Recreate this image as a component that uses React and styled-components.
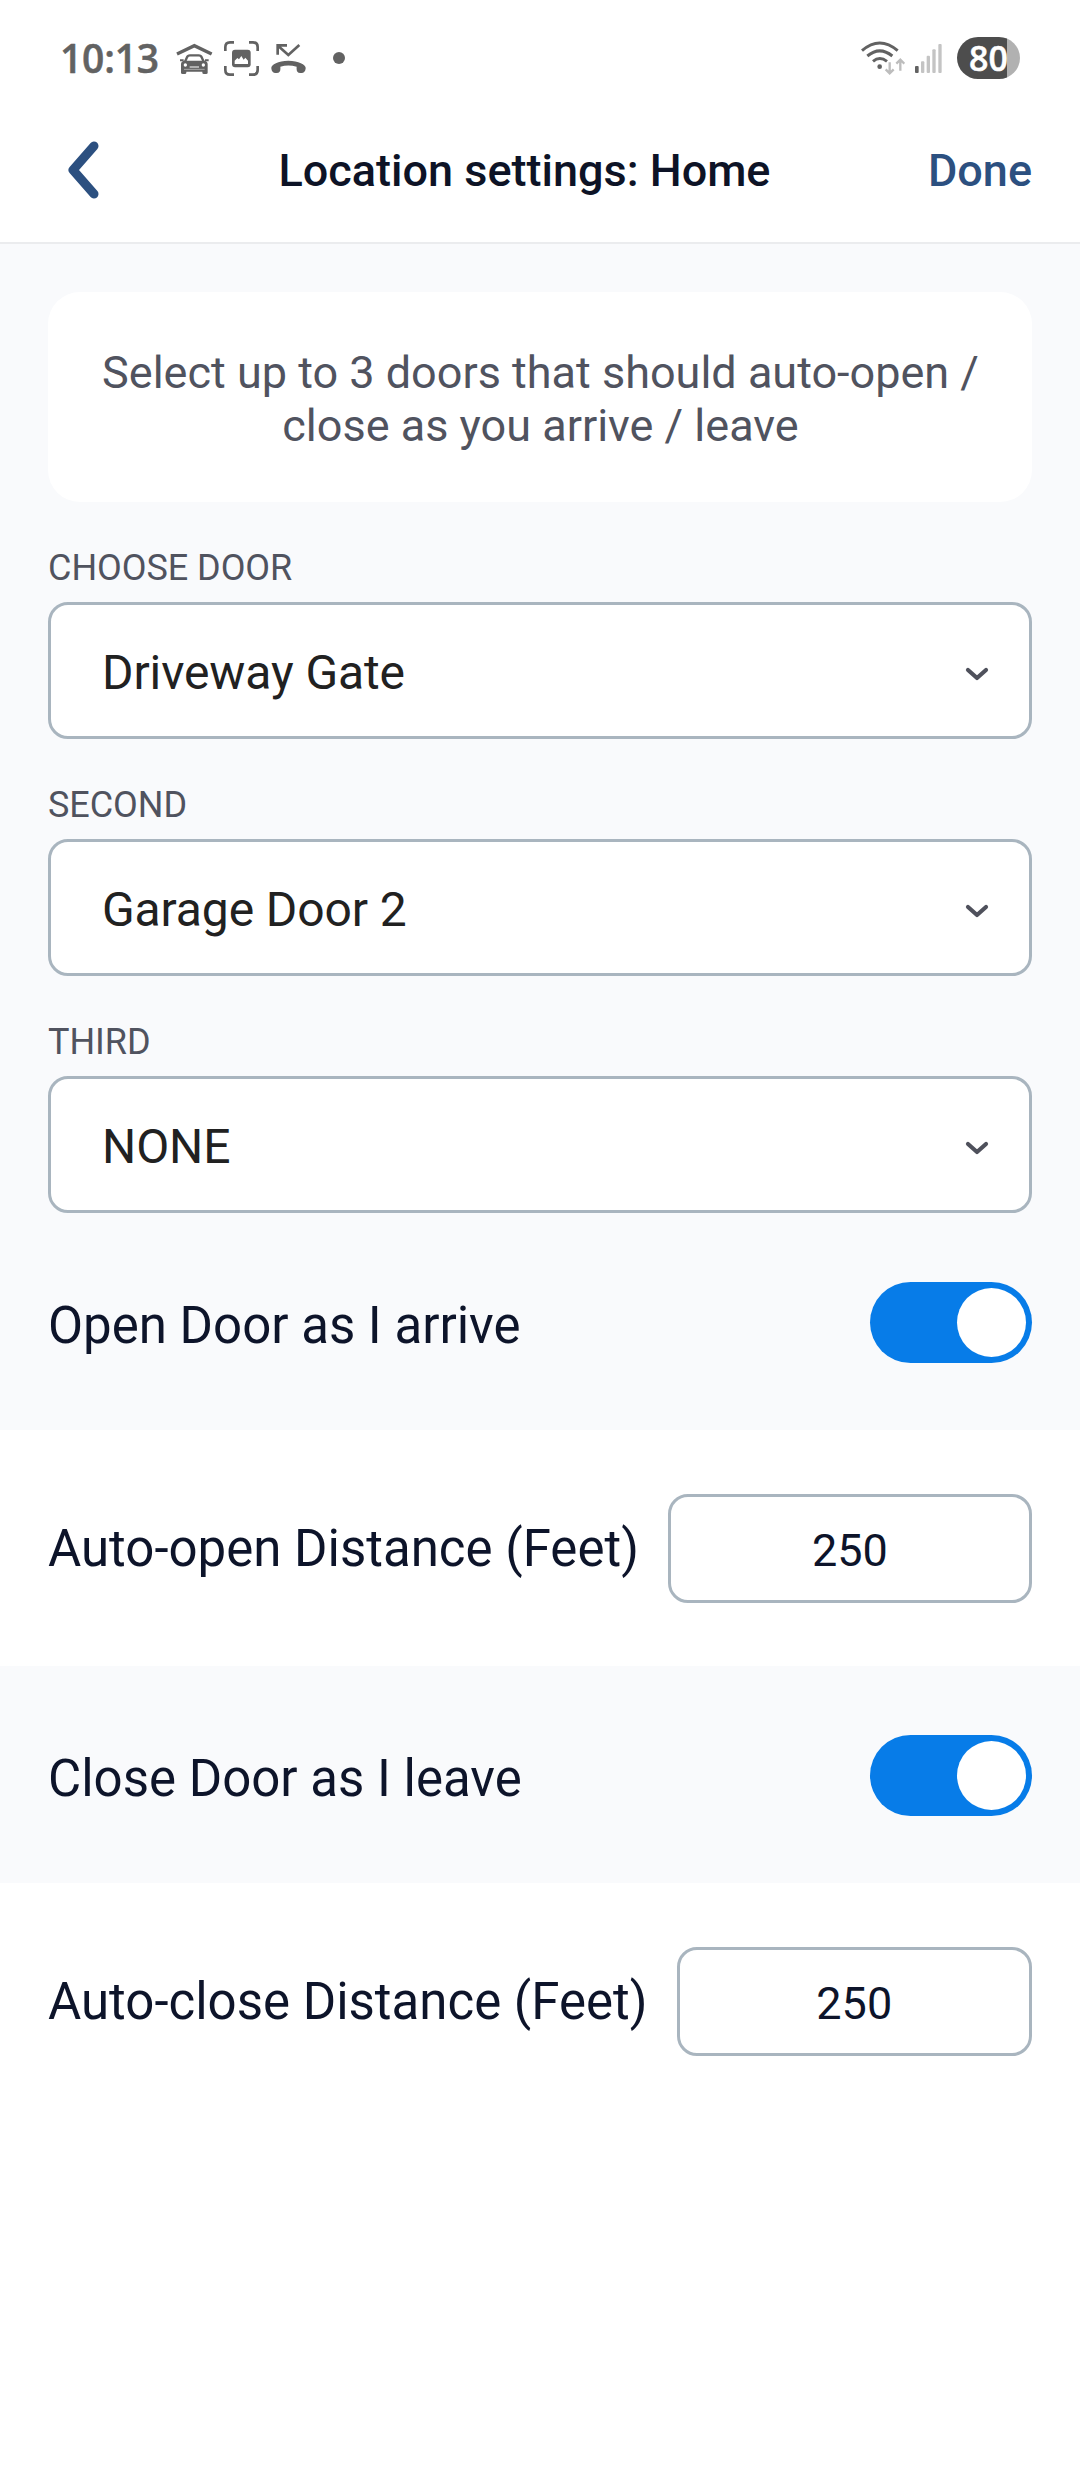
import React, { useState } from "react";
import styled, { createGlobalStyle } from "styled-components";

const GlobalStyle = createGlobalStyle`
  * {
    box-sizing: border-box;
  }

  body {
    margin: 0;
    background: #ffffff;
    font-family: Roboto, "Liberation Sans", sans-serif;
  }

  button, input {
    font-family: inherit;
  }
`;

const Screen = styled.div`
  width: 1080px;
  min-height: 2484px;
  background: #ffffff;
`;

const StatusBar = styled.div`
  display: flex;
  align-items: center;
  justify-content: space-between;
  height: 98px;
  padding: 18px 60px 0 60px;
  color: #626262;
`;

const StatusGroup = styled.div`
  display: flex;
  align-items: center;
  height: 80px;

  svg {
    display: block;
    flex: none;
  }
`;

const Clock = styled.span`
  width: 116px;
  font-family: "Open Sans", "Noto Sans", sans-serif;
  font-size: 39px;
  font-weight: 600;
  line-height: 80px;
  letter-spacing: -0.2px;
  -webkit-text-stroke: 0.5px #626262;
`;

const StatusIcon = styled.span`
  margin-left: ${({ $gap }) => $gap || 0}px;
`;

const Dot = styled.span`
  width: 12px;
  height: 12px;
  margin-left: 27px;
  border-radius: 50%;
  background: #626262;
`;

const Battery = styled.span`
  display: flex;
  align-items: center;
  justify-content: center;
  width: 63px;
  height: 42px;
  margin-left: 15px;
  border-radius: 21px;
  background: linear-gradient(to right, #4d4d4d 50px, #b1b1b1 50px);
  color: #ffffff;
  font-family: "Open Sans", "Noto Sans", sans-serif;
  font-size: 34px;
  font-weight: 600;
  line-height: 40px;
  -webkit-text-stroke: 0.5px #ffffff;
`;

const Header = styled.header`
  display: flex;
  align-items: center;
  height: 146px;
  padding: 0 48px;
  border-bottom: 2px solid #ebecee;
`;

const BackButton = styled.button`
  display: flex;
  width: 73px;
  padding: 0 0 0 19px;
  border: none;
  background: none;
`;

const Title = styled.h1`
  flex: 1;
  margin: 0;
  color: #0d1326;
  font-size: 45px;
  font-weight: 500;
  line-height: 53px;
  text-align: center;
`;

const DoneButton = styled.button`
  padding: 0;
  border: none;
  background: none;
  color: #2c5080;
  font-size: 45px;
  font-weight: 500;
  line-height: 53px;
`;

const DoorSection = styled.section`
  padding: 48px 48px 0;
  background: #f9fafc;
`;

const InfoCard = styled.p`
  height: 210px;
  margin: 0;
  padding: 54px 40px 0 41px;
  border-radius: 32px;
  background: #ffffff;
  color: #50535f;
  font-size: 45px;
  line-height: 53px;
  text-align: center;
`;

const Field = styled.div`
  padding-top: 45px;
`;

const FieldLabel = styled.div`
  margin-bottom: 13px;
  color: #50535f;
  font-size: 36px;
  line-height: 42px;
  letter-spacing: -0.05px;
  text-transform: uppercase;
`;

const Select = styled.div`
  display: flex;
  align-items: center;
  justify-content: space-between;
  height: 137px;
  padding: 4px 39px 0 51px;
  border: 3px solid #a9b5bf;
  border-radius: 20px;
  background: #ffffff;
  color: #212121;
  font-size: 48px;
  letter-spacing: -0.1px;
`;

const ToggleRow = styled.div`
  display: flex;
  align-items: center;
  justify-content: space-between;
  height: 217px;
  padding: 69px 48px 67px;
  background: #f9fafc;
`;

const DistanceRow = styled.div`
  display: flex;
  align-items: center;
  gap: 29px;
  height: 236px;
  padding: 64px 48px 63px;
  background: #ffffff;
`;

const RowLabel = styled.span`
  padding-top: ${({ $drop }) => $drop || 0}px;
  color: #0d142a;
  font-size: 51px;
  line-height: 60px;
  white-space: nowrap;
`;

const Track = styled.button`
  display: flex;
  justify-content: ${({ $on }) => ($on ? "flex-end" : "flex-start")};
  width: 162px;
  height: 81px;
  padding: 6px;
  border: none;
  border-radius: 41px;
  background: ${({ $on }) => ($on ? "#077ce8" : "#a9b5bf")};
`;

const Knob = styled.span`
  width: 69px;
  height: 69px;
  border-radius: 50%;
  background: #ffffff;
`;

const DistanceInput = styled.input`
  flex: 1;
  min-width: 0;
  height: 109px;
  padding: 4px 0 0;
  border: 3px solid #a9b5bf;
  border-radius: 20px;
  outline: none;
  background: #ffffff;
  color: #0d142a;
  font-size: 45px;
  text-align: center;
`;

function GarageIcon() {
  return (
    <svg width="37" height="31" viewBox="0 0 111 93" fill="none">
      <path d="M3 33L55 8L107 33" stroke="#626262" strokeWidth="10" />
      <path
        d="M27 56L33 43Q35 37 42 37H68Q75 37 77 43L83 56"
        stroke="#626262"
        strokeWidth="7"
      />
      <path d="M12 52H23M87 52H98" stroke="#626262" strokeWidth="6" />
      <path
        d="M24 53H86Q95 55 95 64V89Q95 93 90 93H84Q79 93 79 89V86H31V89Q31 93 26 93H20Q15 93 15 89V64Q15 55 24 53Z"
        fill="#626262"
      />
      <circle cx="28" cy="66" r="5" fill="#fff" />
      <circle cx="82" cy="66" r="5" fill="#fff" />
      <path d="M41 72H69" stroke="#fff" strokeWidth="3" />
      <path d="M24 79H86" stroke="#ccc" strokeWidth="2" />
    </svg>
  );
}

function CaptureIcon() {
  return (
    <svg width="35" height="35" viewBox="0 0 105 105" fill="none">
      <path
        d="M4 30V18Q4 4 18 4H30M75 4H87Q101 4 101 18V30M101 75V87Q101 101 87 101H75M30 101H18Q4 101 4 87V75"
        stroke="#626262"
        strokeWidth="8"
      />
      <rect x="24" y="26" width="56" height="53" rx="9" fill="#626262" />
      <path d="M32 69V59L40 51L45 55L52 45L59 56L64 50L72 59V69Z" fill="#fff" />
    </svg>
  );
}

function MissedCallIcon() {
  return (
    <svg width="35" height="30" viewBox="0 0 105 90" fill="none">
      <path d="M20 35V7H48M21 8L52 36L85 6" stroke="#626262" strokeWidth="8" />
      <path
        d="M1 76C-1 66 20 53 52 53S106 66 104 76C103 87 98 91 88 90C78 89 76 84 77 71Q52 64 28 71C29 84 27 89 17 90C7 91 2 87 1 76Z"
        fill="#626262"
      />
    </svg>
  );
}

function WifiIcon() {
  return (
    <svg width="44" height="36" viewBox="0 0 132 108" fill="none">
      <g stroke="#626262" strokeWidth="9">
        <path d="M3 32Q56 -14 110 32" />
        <path d="M19 48Q56 17 94 48" />
        <path d="M36 64Q56 47 78 64" />
      </g>
      <circle cx="56" cy="80" r="7" fill="#626262" />
      <path
        d="M86 67V99M74 88L86 100L98 88M118 92V60M106 71L118 59L130 71"
        stroke="#bdbdbd"
        strokeWidth="7"
      />
    </svg>
  );
}

function SignalIcon() {
  return (
    <svg width="27" height="29" viewBox="0 0 81 87">
      <rect x="0" y="66" width="11" height="21" rx="3" fill="#626262" />
      <g fill="#c4c4c4">
        <rect x="18" y="52" width="10" height="35" rx="3" />
        <rect x="35" y="35" width="10" height="52" rx="3" />
        <rect x="52" y="16" width="10" height="71" rx="3" />
        <rect x="70" y="0" width="10" height="87" rx="3" />
      </g>
    </svg>
  );
}

function ChevronLeft() {
  return (
    <svg width="32" height="60" viewBox="0 0 32 60" fill="none">
      <path
        d="M27 6L6 30L27 54"
        stroke="#2c5080"
        strokeWidth="9"
        strokeLinecap="round"
        strokeLinejoin="round"
      />
    </svg>
  );
}

function ChevronDown() {
  return (
    <svg width="26" height="18" viewBox="0 0 26 18" fill="none">
      <path
        d="M4 6L13 14L22 6"
        stroke="#4f515c"
        strokeWidth="4.2"
        strokeLinecap="round"
        strokeLinejoin="round"
      />
    </svg>
  );
}

function DoorSelect({ label, value }) {
  return (
    <Field>
      <FieldLabel>{label}</FieldLabel>
      <Select>
        <span>{value}</span>
        <ChevronDown />
      </Select>
    </Field>
  );
}

function Toggle({ label }) {
  const [on, setOn] = useState(true);
  return (
    <ToggleRow>
      <RowLabel $drop={6}>{label}</RowLabel>
      <Track $on={on} onClick={() => setOn(!on)} aria-label={label}>
        <Knob />
      </Track>
    </ToggleRow>
  );
}

function Distance({ label }) {
  const [value, setValue] = useState("250");
  return (
    <DistanceRow>
      <RowLabel $drop={1}>{label}</RowLabel>
      <DistanceInput
        value={value}
        aria-label={label}
        onChange={(e) => setValue(e.target.value)}
      />
    </DistanceRow>
  );
}

const doors = [
  { label: "Choose door", value: "Driveway Gate" },
  { label: "Second", value: "Garage Door 2" },
  { label: "Third", value: "NONE" },
];

function App() {
  return (
    <Screen>
      <GlobalStyle />
      <StatusBar>
        <StatusGroup>
          <Clock>10:13</Clock>
          <StatusIcon>
            <GarageIcon />
          </StatusIcon>
          <StatusIcon $gap={11}>
            <CaptureIcon />
          </StatusIcon>
          <StatusIcon $gap={12}>
            <MissedCallIcon />
          </StatusIcon>
          <Dot />
        </StatusGroup>
        <StatusGroup>
          <StatusIcon>
            <WifiIcon />
          </StatusIcon>
          <StatusIcon $gap={10}>
            <SignalIcon />
          </StatusIcon>
          <Battery>80</Battery>
        </StatusGroup>
      </StatusBar>
      <Header>
        <BackButton aria-label="Back">
          <ChevronLeft />
        </BackButton>
        <Title>Location settings: Home</Title>
        <DoneButton>Done</DoneButton>
      </Header>
      <DoorSection>
        <InfoCard>
          Select up to 3 doors that should auto-open / close as you arrive /
          leave
        </InfoCard>
        {doors.map((door) => (
          <DoorSelect key={door.label} label={door.label} value={door.value} />
        ))}
      </DoorSection>
      <Toggle label="Open Door as I arrive" />
      <Distance label="Auto-open Distance (Feet)" />
      <Toggle label="Close Door as I leave" />
      <Distance label="Auto-close Distance (Feet)" />
    </Screen>
  );
}

export default App;
